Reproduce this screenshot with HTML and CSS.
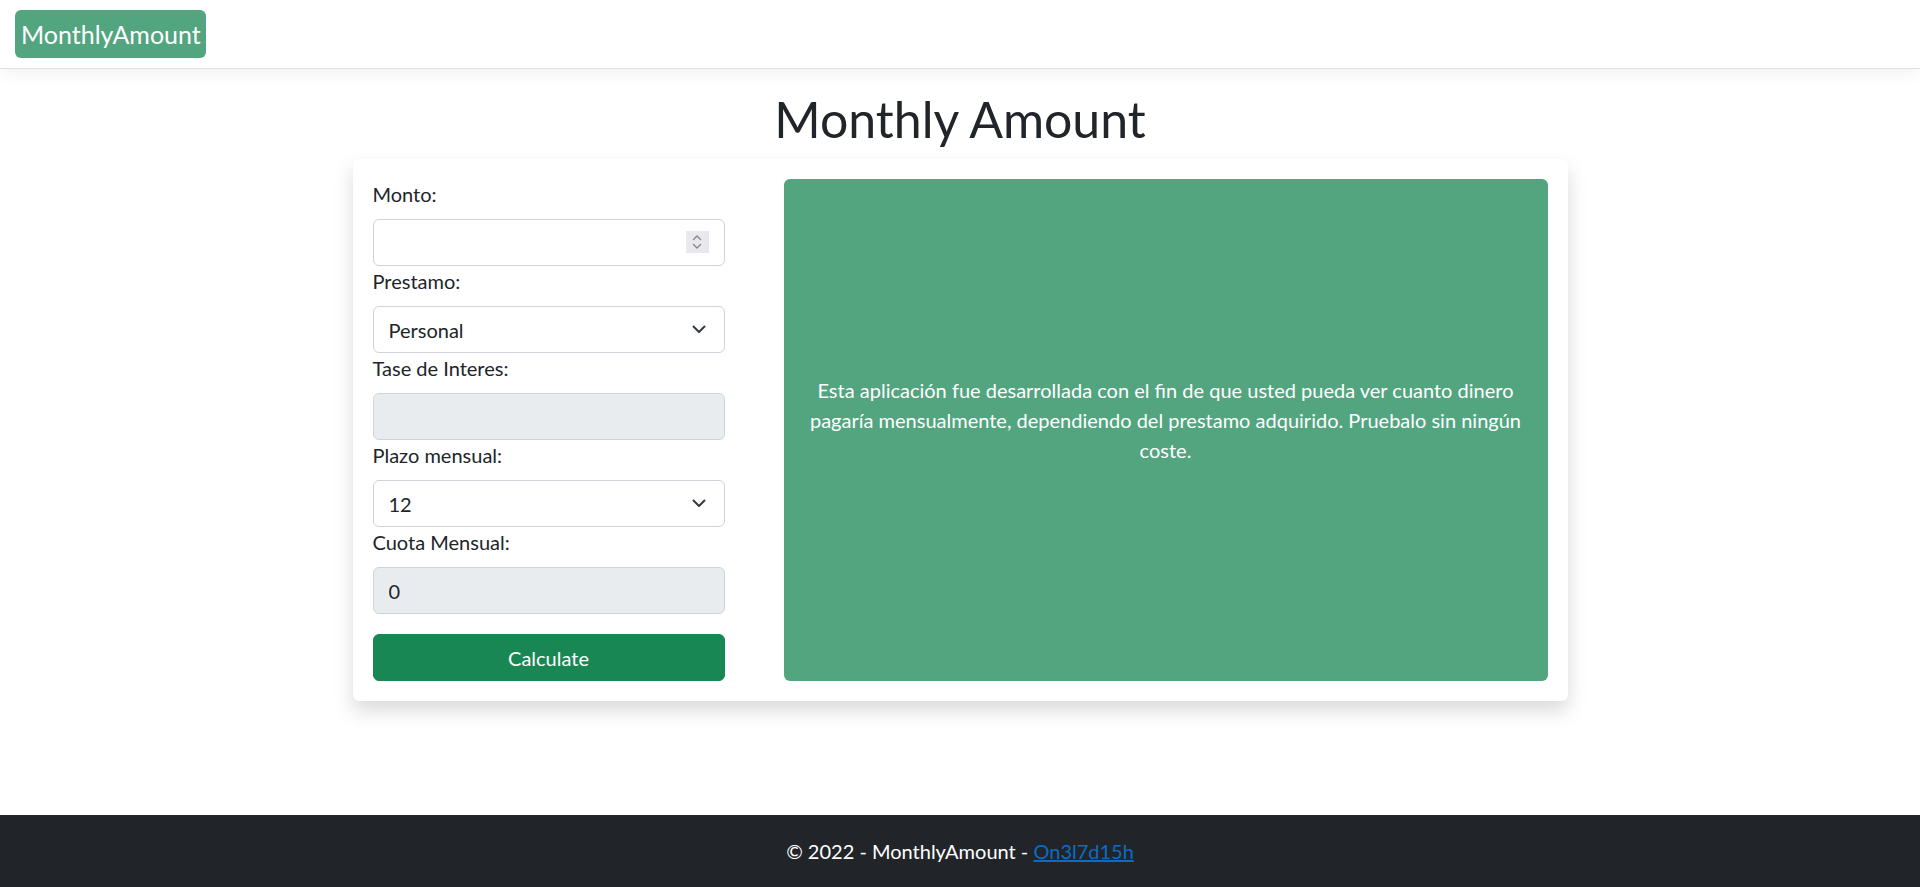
FILE: index.html
```html
<!DOCTYPE html>
<html lang="es">
<head>
<meta charset="utf-8">
<title>MonthlyAmount</title>
<link rel="stylesheet" href="styles.css">
</head>
<body>
<header class="navbar">
  <a class="brand" href="#">MonthlyAmount</a>
</header>
<main class="main">
  <h1 class="title">Monthly Amount</h1>
  <section class="card">
    <form class="calc">
      <div class="group">
        <label class="label" for="monto">Monto:</label>
        <div class="field-wrap">
          <input class="control" id="monto" type="text" value="">
          <span class="spinner">
            <svg width="10" height="16" viewBox="0 0 10 16" fill="none" stroke="#86868c" stroke-width="1.4" stroke-linecap="round" stroke-linejoin="round"><path d="M1.5 5.5 L5 2 L8.5 5.5"/><path d="M1.5 10.5 L5 14 L8.5 10.5"/></svg>
          </span>
        </div>
      </div>
      <div class="group">
        <label class="label" for="prestamo">Prestamo:</label>
        <div class="field-wrap">
          <select class="control select" id="prestamo"><option>Personal</option></select>
          <svg class="chevron" width="14" height="9" viewBox="0 0 14 9" fill="none" stroke="#343a40" stroke-width="2" stroke-linecap="round" stroke-linejoin="round"><path d="M1.5 1.5 L7 7 L12.5 1.5"/></svg>
        </div>
      </div>
      <div class="group">
        <label class="label" for="tasa">Tase de Interes:</label>
        <input class="control disabled" id="tasa" type="text" value="" disabled>
      </div>
      <div class="group">
        <label class="label" for="plazo">Plazo mensual:</label>
        <div class="field-wrap">
          <select class="control select" id="plazo"><option>12</option></select>
          <svg class="chevron" width="14" height="9" viewBox="0 0 14 9" fill="none" stroke="#343a40" stroke-width="2" stroke-linecap="round" stroke-linejoin="round"><path d="M1.5 1.5 L7 7 L12.5 1.5"/></svg>
        </div>
      </div>
      <div class="group">
        <label class="label" for="cuota">Cuota Mensual:</label>
        <input class="control disabled" id="cuota" type="text" value="0" disabled>
      </div>
      <button class="btn" type="button">Calculate</button>
    </form>
    <div class="info">
      <p class="info-text">Esta aplicación fue desarrollada con el fin de que usted pueda ver cuanto dinero pagaría mensualmente, dependiendo del prestamo adquirido. Pruebalo sin ningún coste.</p>
    </div>
  </section>
</main>
<footer class="footer">
  <span>© 2022 - MonthlyAmount - <a class="footer-link" href="#">On3l7d15h</a></span>
</footer>
</body>
</html>
```
FILE: styles.css
```css
* { box-sizing: border-box; }
html, body { margin: 0; padding: 0; }
body {
  font-family: "Lato", "Noto Sans", sans-serif;
  font-size: 20px;
  line-height: 30px;
  color: #212529;
  background: #fff;
  min-height: 100vh;
  display: flex;
  flex-direction: column;
}
.navbar {
  height: 69px;
  padding: 10px 15px;
  border-bottom: 1px solid #dee2e6;
  box-shadow: 0 5px 15px rgba(0, 0, 0, 0.05);
  display: flex;
  align-items: flex-start;
  background: #fff;
}
.brand {
  display: flex;
  align-items: center;
  height: 48px;
  padding: 0 5px 0 6px;
  background: #52a57f;
  color: #fff;
  font-size: 25px;
  text-decoration: none;
  border-radius: 6px;
}
.main {
  flex: 1;
  padding-top: 20px;
}
.title {
  margin: 0 0 10px;
  font-size: 50px;
  line-height: 60px;
  font-weight: 400;
  text-align: center;
  color: #212529;
}
.card {
  width: 1215px;
  margin: 0 auto;
  padding: 20px;
  background: #fff;
  border-radius: 6px;
  box-shadow: 0 10px 20px rgba(0, 0, 0, 0.15);
  display: flex;
  justify-content: space-between;
}
.calc {
  width: 352px;
  display: flex;
  flex-direction: column;
}
.group { display: flex; flex-direction: column; }
.label {
  display: block;
  height: 30px;
  margin-bottom: 10px;
  line-height: 30px;
}
.field-wrap { position: relative; }
.control {
  display: block;
  width: 100%;
  height: 47px;
  padding: 7.5px 15px;
  font-family: inherit;
  font-size: 20px;
  line-height: 30px;
  color: #212529;
  background: #fff;
  border: 1px solid #ced4da;
  border-radius: 6px;
  outline: none;
  appearance: none;
  -webkit-appearance: none;
}
.select { padding-right: 50px; }
.disabled { background: #e9ecef; opacity: 1; color: #212529; -webkit-text-fill-color: #212529; }
.spinner {
  position: absolute;
  top: 12px;
  right: 16px;
  width: 23px;
  height: 22px;
  background: #e9e9ed;
  display: flex;
  align-items: center;
  justify-content: center;
  pointer-events: none;
}
.chevron {
  position: absolute;
  top: 19px;
  right: 19px;
  pointer-events: none;
}
.btn {
  margin-top: 20px;
  height: 47px;
  width: 100%;
  border: 1px solid #198754;
  border-radius: 6px;
  background: #198754;
  color: #fff;
  font-family: inherit;
  font-size: 20px;
  line-height: 30px;
  cursor: pointer;
}
.info {
  width: 764px;
  background: #52a57f;
  border-radius: 6px;
  color: #fff;
  display: flex;
  align-items: center;
  justify-content: center;
  text-align: center;
  padding: 0 10px;
}
.info-text { margin: 0 0 20px; }
.footer {
  height: 72px;
  background: #212529;
  color: #fff;
  display: flex;
  align-items: center;
  justify-content: center;
  line-height: 30px;
}
.footer-link { color: #0b6cc6; }
```
